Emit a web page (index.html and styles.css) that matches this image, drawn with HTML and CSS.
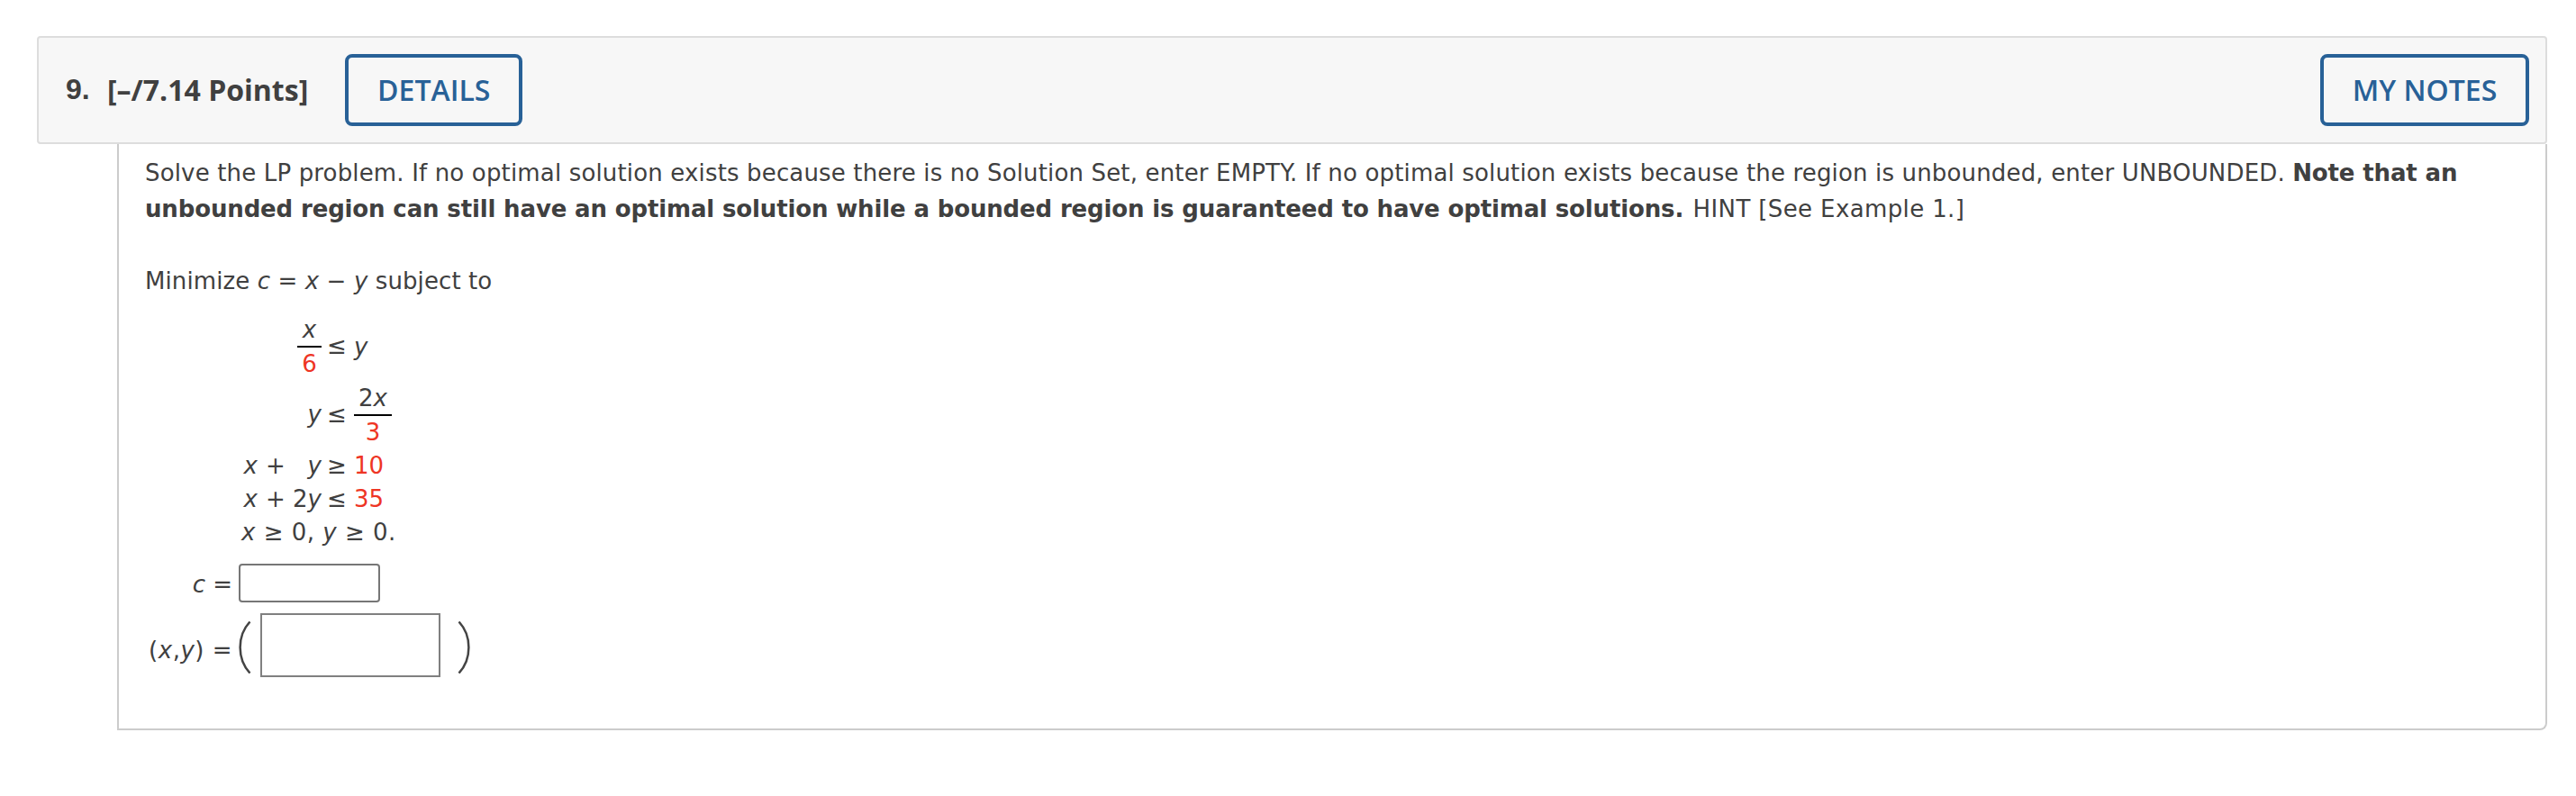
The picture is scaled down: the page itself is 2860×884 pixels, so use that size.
FILE: index.html
```
<!DOCTYPE html>
<html lang="en">
<head>
    <meta charset="UTF-8">
    <meta name="viewport" content="width=device-width, initial-scale=1.0">
    <title>Question 9</title>
    <link rel="stylesheet" href="styles.css">
</head>
<body>
    <div class="question">
        <div class="question-header">
            <span class="number">9.</span>
            <span class="points">[–/7.14 Points]</span>
            <button class="btn details">DETAILS</button>
            <button class="btn notes">MY NOTES</button>
        </div>
        <div class="question-body">
            <p class="intro">Solve the LP problem. If no optimal solution exists because there is no Solution Set, enter EMPTY. If no optimal solution exists because the region is unbounded, enter UNBOUNDED. <b>Note that an</b><br><b>unbounded region can still have an optimal solution while a bounded region is guaranteed to have optimal solutions.</b> <span class="hint">HINT [See Example 1.]</span></p>
            <p class="objective">Minimize <i>c</i> = <i>x</i> − <i>y</i> subject to</p>

            <div class="row tall">
                <span class="lhs"><span class="frac"><i>x</i><span class="den red">6</span></span></span>
                <span class="rel">≤</span>
                <span class="rhs"><i>y</i></span>
            </div>
            <div class="row tall">
                <span class="lhs"><i>y</i></span>
                <span class="rel">≤</span>
                <span class="rhs"><span class="frac wide"><span>2<i>x</i></span><span class="den red">3</span></span></span>
            </div>
            <div class="row">
                <span class="lhs"><i>x</i><span class="plus">+</span><span class="term"><i>y</i></span></span>
                <span class="rel">≥</span>
                <span class="rhs red">10</span>
            </div>
            <div class="row">
                <span class="lhs"><i>x</i><span class="plus">+</span><span class="term">2<i>y</i></span></span>
                <span class="rel">≤</span>
                <span class="rhs red">35</span>
            </div>
            <div class="row last"><i>x</i> ≥ 0, <i>y</i> ≥ 0.</div>

            <div class="answer">
                <label for="c-value"><i>c</i> =</label>
                <input type="text" id="c-value">
            </div>
            <div class="answer pair">
                <label for="xy-value">(<i>x</i>,<i>y</i>) =</label>
                <svg class="paren" width="14" height="58" viewBox="0 0 14 58"><path d="M12.500 .5C-2 16-2 42 12.500 57.500"/></svg>
                <input type="text" id="xy-value">
                <svg class="paren right" width="14" height="58" viewBox="0 0 14 58"><path d="M1.500 .5C16 16 16 42 1.500 57.500"/></svg>
            </div>
        </div>
    </div>
</body>
</html>
```
FILE: styles.css
```
* {
    box-sizing: border-box;
}

body {
    margin: 0;
    background: #fff;
    color: #404040;
    font-family: Verdana, "DejaVu Sans", sans-serif;
    font-size: 26px;
}

p {
    margin: 0;
}

.question {
    margin: 40px 32px 0 41px;
}

.question-header {
    display: flex;
    align-items: center;
    height: 120px;
    padding: 0 18px 0 30px;
    background: #f7f7f7;
    border: 2px solid #ddd;
    border-radius: 4px;
    font-family: "Open Sans", sans-serif;
    font-size: 32px;
    font-weight: bold;
}

.number {
    width: 46px;
    padding-bottom: 1px;
    font-family: "Liberation Sans", Arial, sans-serif;
}

.points {
    padding-bottom: 2px;
}

.btn {
    height: 80px;
    padding: 0 0 2px;
    background: none;
    border: 4px solid #286197;
    border-radius: 8px;
    color: #286197;
    font-family: inherit;
    font-size: 32px;
    font-weight: 600;
}

.details {
    width: 197px;
    margin-left: 41px;
}

.notes {
    width: 232px;
    margin-left: auto;
}

.question-body {
    height: 651px;
    margin-left: 89px;
    padding: 12px 0 0 28px;
    border: 2px solid #ccc;
    border-top: none;
    border-bottom-right-radius: 8px;
}

.intro,
.objective {
    padding-left: 1px;
    line-height: 40px;
    white-space: nowrap;
}

.intro {
    letter-spacing: 0.156px;
}

.intro b {
    letter-spacing: -0.145px;
}

.intro .hint {
    margin-left: 2px;
    letter-spacing: 0.38px;
}

.objective {
    margin: 40px 0 15px;
    letter-spacing: 0.1px;
}

.row {
    display: grid;
    grid-template-columns: 197px 36px 1fr;
    align-items: center;
    height: 37px;
    line-height: 37px;
}

.tall {
    height: 76px;
}

.tall .rel,
.tall > .lhs > i,
.tall > .rhs > i {
    padding-bottom: 2px;
}

.lhs {
    display: flex;
    justify-content: flex-end;
}

.rel {
    padding-left: 6px;
}

.plus {
    width: 25px;
    margin-left: 9px;
}

.term {
    width: 37px;
    text-align: right;
}

.frac {
    display: inline-grid;
    width: 27px;
    text-align: center;
    line-height: 36px;
}

.wide {
    width: 42px;
}

.den {
    border-top: 2px solid #000;
}

.red {
    color: #ee3524;
}

.last {
    display: block;
    padding-left: 108px;
    letter-spacing: 0.5px;
}

.answer {
    display: flex;
    align-items: center;
    height: 43px;
    margin-top: 16px;
}

.answer label {
    width: 98px;
    padding-top: 2px;
    text-align: right;
}

.answer input {
    width: 157px;
    height: 43px;
    margin-left: 7px;
    background: #fff;
    border: 2px solid #767676;
    border-radius: 4px;
}

.pair {
    height: 71px;
    margin-top: 12px;
}

.pair label {
    padding-top: 10px;
    letter-spacing: 0.5px;
}

.pair input {
    width: 200px;
    height: 71px;
    margin-left: 10px;
    border-color: #808080;
    border-radius: 0;
}

.paren {
    margin: 4px 0 0 7px;
    fill: none;
    stroke: #444;
    stroke-width: 2.5;
}

.right {
    margin-left: 19px;
}
```
